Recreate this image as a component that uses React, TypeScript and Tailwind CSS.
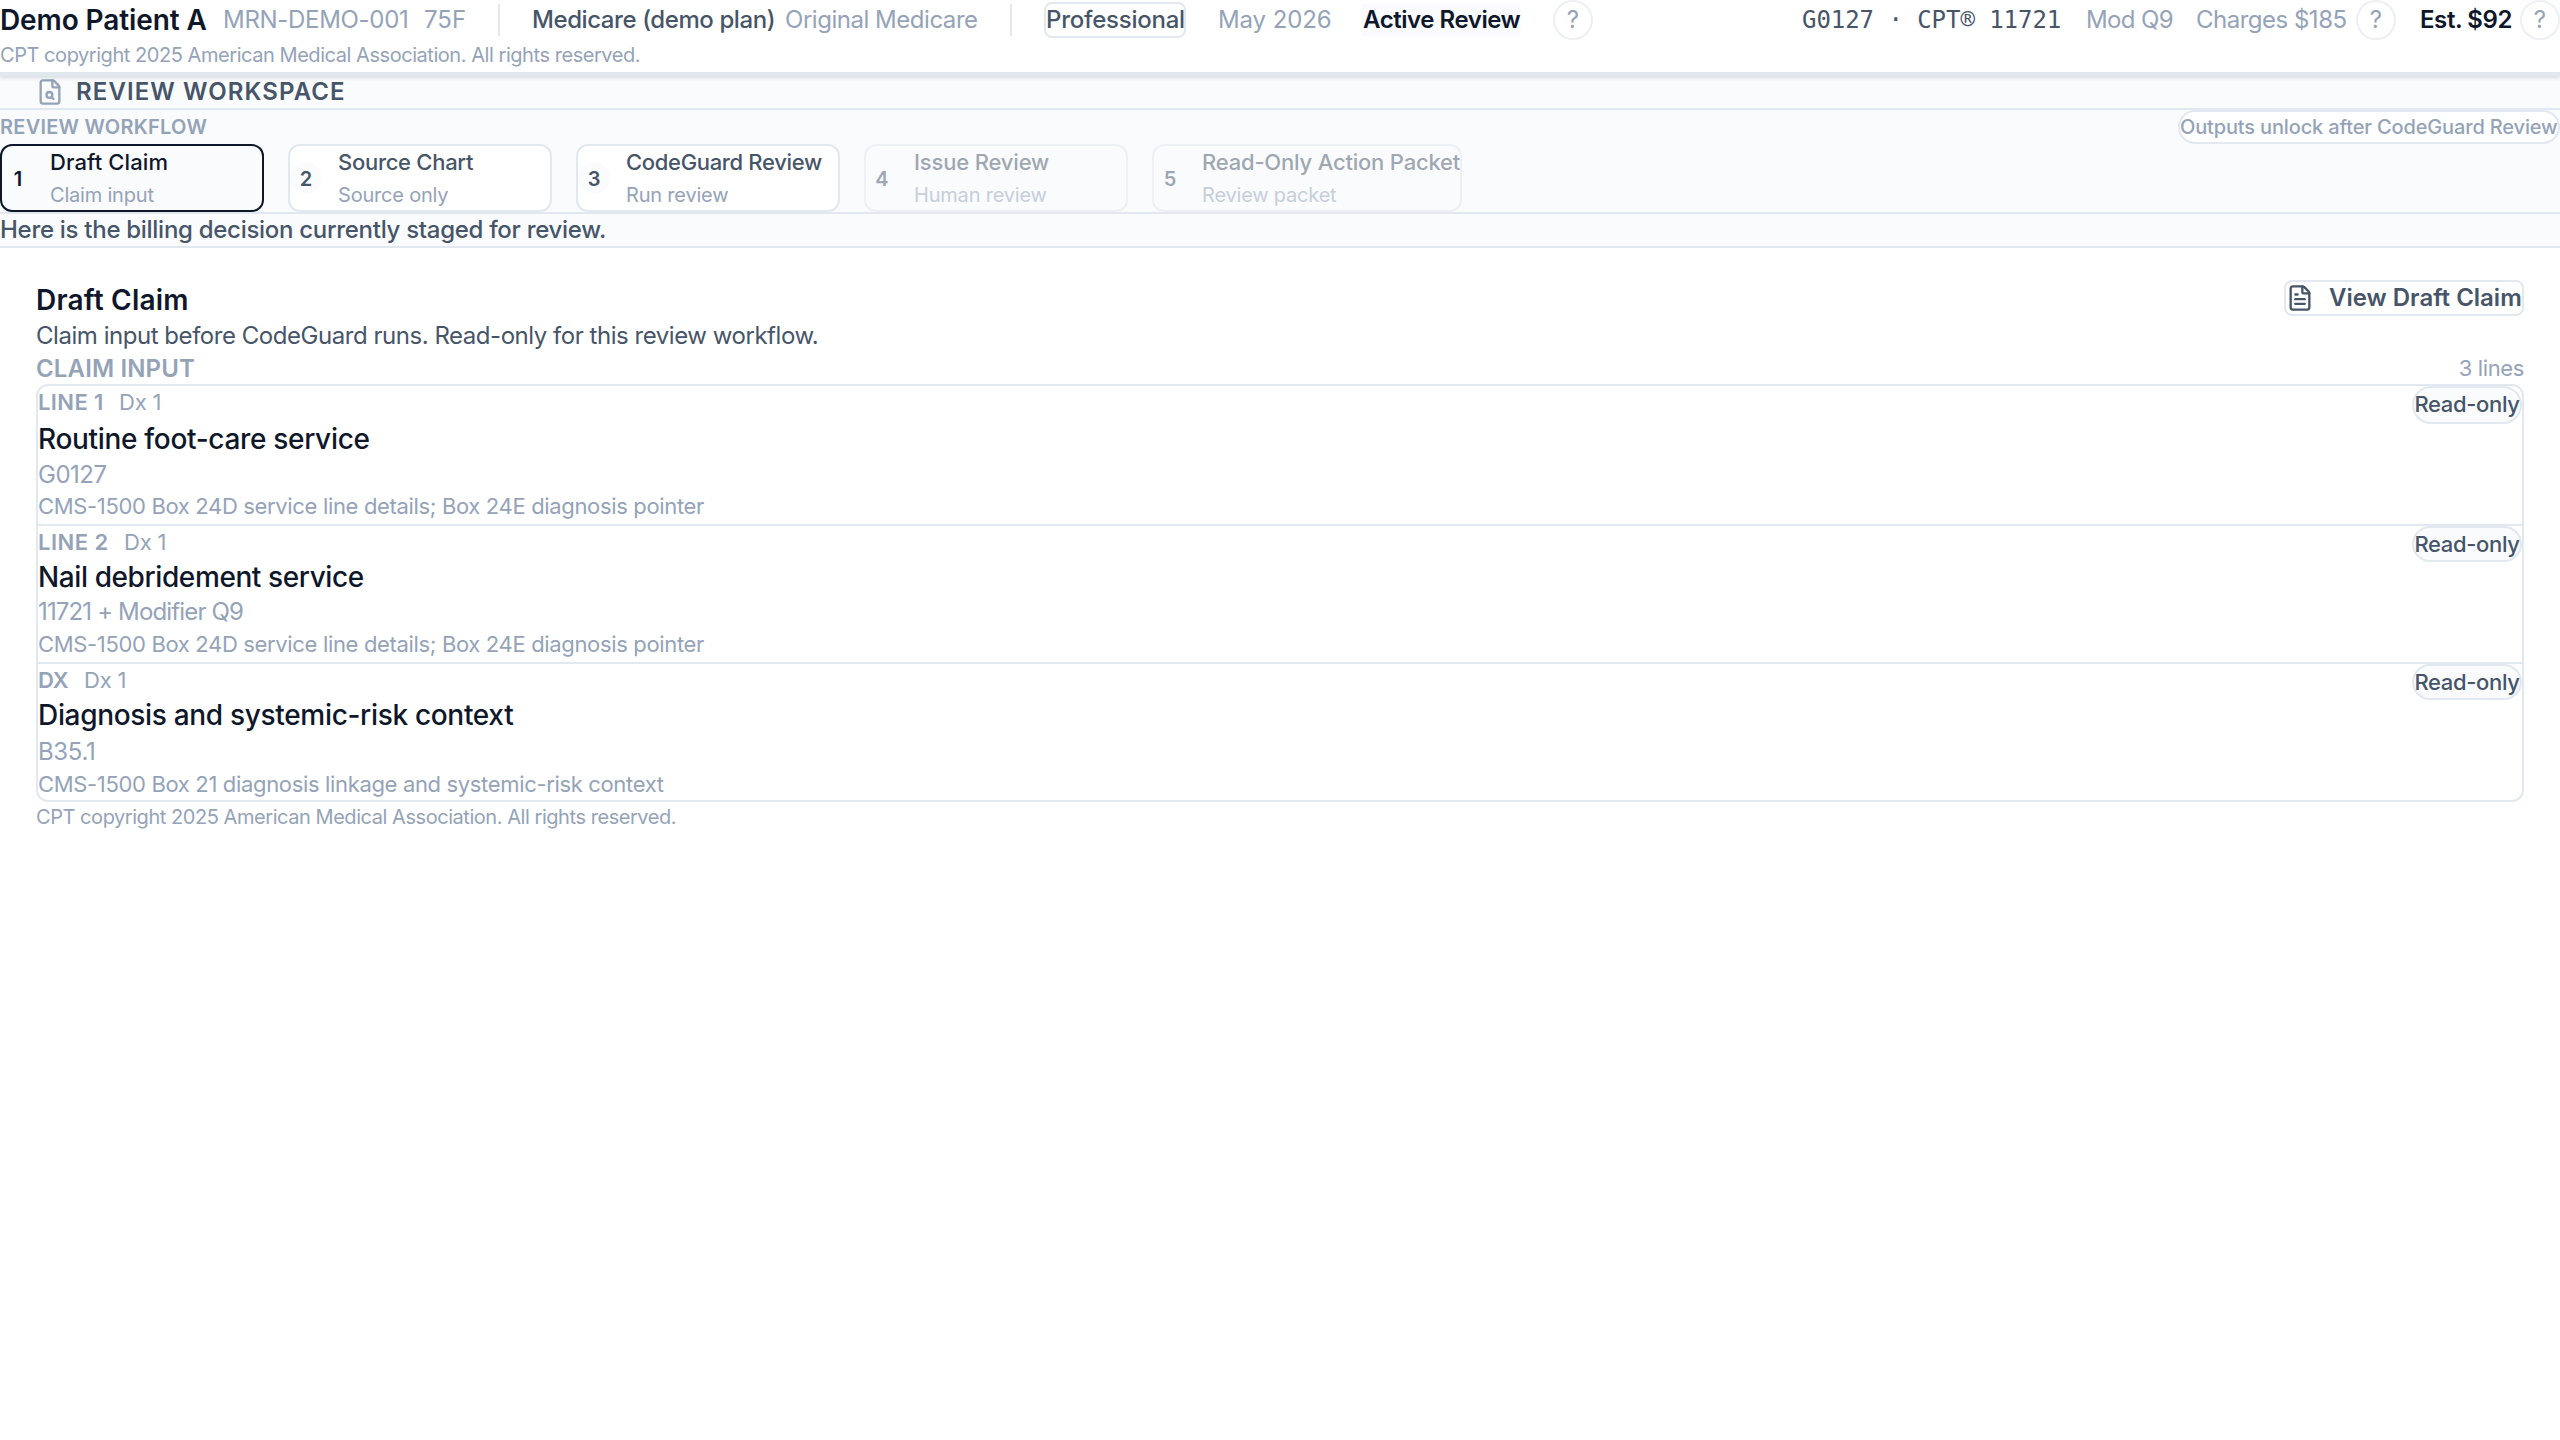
import type { ReactNode } from "react";
import { FileSearch, FileText } from "lucide-react";

interface Step {
  id: number;
  label: string;
  sub: string;
  labelClass: string;
  state: "active" | "open" | "locked";
}

interface ClaimLine {
  tag: string;
  tagClass: string;
  pointer: string;
  title: string;
  titleClass: string;
  code: string;
  codeClass: string;
  detail: string;
  detailClass: string;
  rowClass: string;
  pillClass: string;
}

const STEPS: Step[] = [
  { id: 1, label: "Draft Claim", sub: "Claim input", labelClass: "tracking-[0.1px]", state: "active" },
  { id: 2, label: "Source Chart", sub: "Source only", labelClass: "tracking-[-0.28px]", state: "open" },
  { id: 3, label: "CodeGuard Review", sub: "Run review", labelClass: "tracking-[-0.33px]", state: "open" },
  { id: 4, label: "Issue Review", sub: "Human review", labelClass: "tracking-[-0.17px]", state: "locked" },
  { id: 5, label: "Read-Only Action Packet", sub: "Review packet", labelClass: "tracking-[-0.2px]", state: "locked" },
];

const STEP_STYLES = {
  active: "border-[#0f172a] bg-[#f9fbfd]",
  open: "border-[#e2e8f0] bg-white",
  locked: "border-[#e2e8f0] bg-[#f9fbfd] opacity-50",
};

const LINES: ClaimLine[] = [
  {
    tag: "LINE 1",
    tagClass: "w-[81px] tracking-[0.4px]",
    pointer: "Dx 1",
    title: "Routine foot-care service",
    titleClass: "leading-[42px] tracking-[-0.32px]",
    code: "G0127",
    codeClass: "leading-[29px] tracking-[-0.5px]",
    detail: "CMS-1500 Box 24D service line details; Box 24E diagnosis pointer",
    detailClass: "leading-[34px]",
    rowClass: "h-[140px] border-b-2",
    pillClass: "h-[38px] pb-[2px]",
  },
  {
    tag: "LINE 2",
    tagClass: "w-[86px] tracking-[0.5px]",
    pointer: "Dx 1",
    title: "Nail debridement service",
    titleClass: "leading-[38px] tracking-[-0.4px]",
    code: "11721 + Modifier Q9",
    codeClass: "leading-[32px] tracking-[-0.85px]",
    detail: "CMS-1500 Box 24D service line details; Box 24E diagnosis pointer",
    detailClass: "leading-[33px]",
    rowClass: "h-[138px] border-b-2",
    pillClass: "h-[36px]",
  },
  {
    tag: "DX",
    tagClass: "w-[46px]",
    pointer: "Dx 1",
    title: "Diagnosis and systemic-risk context",
    titleClass: "leading-[38px] tracking-[-0.32px]",
    code: "B35.1",
    codeClass: "leading-[36px] tracking-[-0.35px]",
    detail: "CMS-1500 Box 21 diagnosis linkage and systemic-risk context",
    detailClass: "leading-[28px]",
    rowClass: "h-[136px]",
    pillClass: "h-[36px]",
  },
];

const COPYRIGHT = "CPT copyright 2025 American Medical Association. All rights reserved.";

function HelpDot() {
  return (
    <span className="flex h-10 w-10 shrink-0 items-center justify-center rounded-full border-2 border-[#eceff3] bg-white text-[24px] text-[#94a3b8]">
      ?
    </span>
  );
}

function Copyright({ children }: { children: ReactNode }) {
  return (
    <p className="text-[20px] leading-[30px] tracking-[-0.45px] text-[#94a3b8]">{children}</p>
  );
}

function PatientHeader() {
  return (
    <header className="relative z-10 h-[76px] border-b-4 border-[#e2e8f0] bg-white shadow-[0_2px_4px_rgba(15,23,42,0.14)]">
      <div className="flex h-10 items-center justify-between text-[24px] leading-[32px] text-[#94a3b8]">
        <div className="flex items-center">
          <span className="w-[223px] text-[28px] font-semibold tracking-[-0.1px] text-[#0f172a]">
            Demo Patient A
          </span>
          <span className="w-[201px] tracking-[-0.3px]">MRN-DEMO-001</span>
          <span className="w-[74px]">75F</span>
          <span className="h-8 w-[2px] bg-[#e2e8f0]" />
          <span className="ml-8 w-[253px] font-medium tracking-[-0.42px] text-[#475569]">
            Medicare (demo plan)
          </span>
          <span className="w-[225px] tracking-[-0.47px]">Original Medicare</span>
          <span className="h-8 w-[2px] bg-[#e2e8f0]" />
          <span className="ml-8 w-[142px] rounded-lg border-2 border-[#e2e8f0] font-medium tracking-[-0.24px] text-[#475569]">
            Professional
          </span>
          <span className="ml-8 w-[143px] tracking-[-0.1px]">May 2026</span>
          <span className="w-[160px] rounded bg-[#f9fbfd] pl-[2px] font-semibold tracking-[-0.45px] text-[#0f172a]">
            Active Review
          </span>
          <span className="w-8" />
          <HelpDot />
        </div>
        <div className="flex items-center">
          <span className="w-[284px] font-['DejaVu_Sans_Mono','Liberation_Mono',monospace] tracking-[-0.05px] text-[#475569]">
            G0127 · CPT® 11721
          </span>
          <span className="w-[110px] tracking-[-0.6px]">Mod Q9</span>
          <span className="w-[160px] tracking-[-0.5px]">Charges $185</span>
          <HelpDot />
          <span className="ml-6 w-[100px] font-semibold tracking-[-0.41px] text-[#0f172a]">
            Est. $92
          </span>
          <HelpDot />
        </div>
      </div>
      <Copyright>{COPYRIGHT}</Copyright>
    </header>
  );
}

function StepCard({ step }: { step: Step }) {
  return (
    <li
      className={`flex h-[68px] min-w-[264px] items-center rounded-xl border-2 ${STEP_STYLES[step.state]}`}
    >
      <span
        className={`flex h-8 w-8 items-center justify-center rounded-full bg-[#f9fbfd] pt-[2px] text-[20px] font-semibold ${
          step.state === "active" ? "text-[#0f172a]" : "text-[#475569]"
        }`}
      >
        {step.id}
      </span>
      <span className="ml-4 block whitespace-nowrap">
        <span
          className={`block text-[22px] leading-[32px] font-medium ${step.labelClass} ${
            step.state === "active" ? "text-[#0f172a]" : "text-[#475569]"
          }`}
        >
          {step.label}
        </span>
        <span className="mt-[2px] block text-[20px] leading-[30px] tracking-[-0.2px] text-[#94a3b8]">
          {step.sub}
        </span>
      </span>
    </li>
  );
}

function Workflow() {
  return (
    <section className="border-b-2 border-[#e2e8f0]">
      <div className="flex h-[34px] items-center justify-between text-[20px] leading-[30px] text-[#94a3b8]">
        <h2 className="font-semibold tracking-[0.25px]">REVIEW WORKFLOW</h2>
        <span className="w-[382px] rounded-full border-2 border-[#e2e8f0] bg-white font-medium tracking-[-0.15px] whitespace-nowrap">
          Outputs unlock after CodeGuard Review
        </span>
      </div>
      <ol className="flex gap-6">
        {STEPS.map((s) => (
          <StepCard key={s.id} step={s} />
        ))}
      </ol>
    </section>
  );
}

function ClaimRow({ line }: { line: ClaimLine }) {
  return (
    <li className={`flex items-start justify-between border-[#e2e8f0] ${line.rowClass}`}>
      <div className="text-[#94a3b8]">
        <div className="flex text-[22px] leading-[32px]">
          <span className={`font-semibold ${line.tagClass}`}>{line.tag}</span>
          <span className="tracking-[-0.2px]">{line.pointer}</span>
        </div>
        <h4 className={`text-[28px] font-medium text-[#0f172a] ${line.titleClass}`}>{line.title}</h4>
        <p className={`text-[24px] ${line.codeClass}`}>{line.code}</p>
        <p className={`text-[22px] tracking-[-0.34px] ${line.detailClass}`}>{line.detail}</p>
      </div>
      <span
        className={`flex w-[110px] items-center justify-center rounded-full border-2 border-[#e2e8f0] bg-[#f9fbfd] text-[22px] font-medium tracking-[-0.35px] whitespace-nowrap text-[#475569] ${line.pillClass}`}
      >
        Read-only
      </span>
    </li>
  );
}

export default function App() {
  return (
    <div className="min-h-screen bg-white font-['Inter','Liberation_Sans',sans-serif]">
      <PatientHeader />

      <div className="bg-[#f9fbfd]">
        <div className="flex h-[34px] items-center border-b-2 border-[#e2e8f0] pl-9">
          <FileSearch size={28} strokeWidth={2} className="text-[#94a3b8]" />
          <h1 className="ml-3 text-[24px] leading-[30px] font-semibold tracking-[1.1px] text-[#475569]">
            REVIEW WORKSPACE
          </h1>
        </div>
        <Workflow />
        <p className="h-[34px] border-b-2 border-[#e2e8f0] text-[24px] leading-[31px] font-medium tracking-[-0.29px] text-[#475569]">
          Here is the billing decision currently staged for review.
        </p>
      </div>

      <main className="px-9 pt-8">
        <div className="flex items-start justify-between">
          <div>
            <h2 className="text-[28px] leading-[41px] font-semibold tracking-[0.2px] text-[#0f172a]">
              Draft Claim
            </h2>
            <p className="text-[24px] leading-[30px] tracking-[-0.46px] text-[#475569]">
              Claim input before CodeGuard runs. Read-only for this review workflow.
            </p>
          </div>
          <button className="flex h-9 w-[240px] items-center rounded-lg border-2 border-[#e2e8f0] bg-white text-[24px] leading-[32px] font-semibold whitespace-nowrap text-[#475569]">
            <FileText size={28} strokeWidth={2} className="shrink-0" />
            <span className="ml-[15px]">View Draft Claim</span>
          </button>
        </div>

        <div className="flex h-[33px] items-center justify-between pt-[2px] text-[#94a3b8]">
          <h3 className="text-[24px] leading-[31px] font-semibold tracking-[0.14px]">CLAIM INPUT</h3>
          <span className="text-[22px] leading-[31px] tracking-[-0.38px]">3 lines</span>
        </div>

        <ul className="rounded-xl border-2 border-[#e2e8f0]">
          {LINES.map((l) => (
            <ClaimRow key={l.tag} line={l} />
          ))}
        </ul>
        <Copyright>{COPYRIGHT}</Copyright>
      </main>
    </div>
  );
}
